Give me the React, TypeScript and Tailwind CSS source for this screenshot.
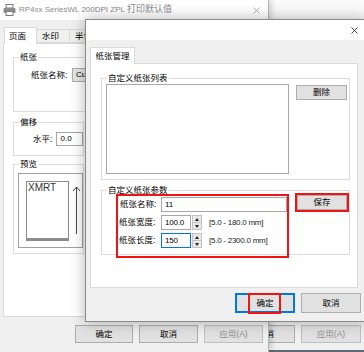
import React from 'react';

const Btn = ({ children, className = '' }: { children: React.ReactNode; className?: string }) => (
  <div className={`flex items-center justify-center bg-[#e1e1e1] border border-[#adadad] text-[8.5px] leading-none ${className}`}>
    {children}
  </div>
);

const Group = ({ title, className = '', children }: { title: string; className?: string; children?: React.ReactNode }) => (
  <fieldset className={`border border-[#dcdcdc] min-w-0 ${className}`}>
    <legend className="ml-[5px] px-[1px] text-[8.5px] leading-[9px]">{title}</legend>
    {children}
  </fieldset>
);

const Cross = ({ color }: { color: string }) => (
  <svg width="7" height="7" viewBox="0 0 7 7">
    <path d="M0.5 0.5L6.5 6.5M6.5 0.5L0.5 6.5" stroke={color} strokeWidth="0.9" />
  </svg>
);

const Spinner = () => (
  <div className="ml-px flex h-[15px] w-[10px] flex-col border border-[#c4c4c4] bg-[#e9e9e9]">
    <div className="flex flex-1 items-center justify-center border-b border-[#c4c4c4]">
      <svg width="4" height="3" viewBox="0 0 4 3"><path d="M2 0L4 3H0Z" fill="#222" /></svg>
    </div>
    <div className="flex flex-1 items-center justify-center">
      <svg width="4" height="3" viewBox="0 0 4 3"><path d="M0 0H4L2 3Z" fill="#222" /></svg>
    </div>
  </div>
);

const ParamRow = ({ label, value, range, focused }: { label: string; value: string; range: string; focused?: boolean }) => (
  <div className="mt-[3px] flex items-center">
    <span className="w-[43px] pl-px text-[8.5px] leading-none">{label}</span>
    <div
      className={`flex h-[15px] w-[30px] items-center bg-white pl-[3px] text-[8px] tracking-[-0.2px] ${
        focused ? 'border border-[#0078d7]' : 'border border-[#a6a6a6]'
      }`}
    >
      {value}
    </div>
    <Spinner />
    <span className="ml-[7px] text-[8px] tracking-[-0.25px] text-[#222]">{range}</span>
  </div>
);

export default function App() {
  return (
    <div className="relative h-[352px] w-[364px] overflow-hidden bg-[#f0f0f0] font-['Liberation_Sans','Noto_Sans_CJK_SC',sans-serif] text-black">
      {/* window behind, to the right */}
      <div className="absolute left-[96px] top-0 flex h-[352px] w-[300px] flex-col bg-[#f0f0f0]">
        <div className="h-[20px] border-b border-[#e2e2e2] bg-[#fafafa]" />
        <div className="flex-1" />
        <div className="flex h-[18px] gap-[6px] pl-[140px]">
          <Btn className="w-[59px]">取消</Btn>
          <Btn className="w-[60px] border-[#bfbfbf] bg-[#cccccc] text-[#8f8f8f]">应用(A)</Btn>
        </div>
        <div className="mt-[7px] h-[2px] bg-[#5e6b75]" />
      </div>

      {/* printing defaults window */}
      <div className="absolute left-0 top-0 flex h-[352px] w-[269px] flex-col border-r border-[#b5b5b5] bg-[#f0f0f0] shadow-[2px_0_6px_rgba(0,0,0,0.18)]">
        <div className="flex h-[20px] items-center bg-white pl-[3px] pr-[8px]">
          <svg width="13" height="12" viewBox="0 0 13 12">
            <rect x="3" y="0.5" width="7" height="3.5" fill="#fff" stroke="#7a7a7a" />
            <rect x="0.5" y="4" width="12" height="5" rx="1" fill="#8c8c8c" />
            <rect x="3" y="7.5" width="7" height="4" fill="#fff" stroke="#7a7a7a" />
          </svg>
          <span className="ml-[3px] whitespace-nowrap text-[8px] text-[#8a8a8a]">
            RP4xx SeriesWL 200DPI ZPL <span className="text-[9px]">打印默认值</span>
          </span>
          <span className="ml-auto">
            <Cross color="#a8a8a8" />
          </span>
        </div>

        <div className="flex h-[23px] items-end pl-[4px] text-[8.5px] leading-none">
          <div className="relative z-10 -mb-px flex h-[17px] w-[33px] items-center border border-b-0 border-[#d9d9d9] bg-white pl-[4px]">页面</div>
          <div className="flex h-[14px] w-[33px] items-center border border-l-0 border-[#d9d9d9] bg-[#f0f0f0] pl-[5px]">水印</div>
          <div className="flex h-[14px] w-[40px] items-center border border-l-0 border-[#d9d9d9] bg-[#f0f0f0] pl-[5px]">半色调</div>
        </div>

        <div className="ml-[3px] h-[274px] w-[264px] border border-[#d9d9d9] bg-white pl-[9px] pt-[9px]">
          <Group title="纸张" className="h-[59px] w-[240px]">
            <div className="mt-[6px] flex items-center">
              <span className="w-[58px] pl-[17px] text-[8.5px] leading-none">纸张名称:</span>
              <div className="flex h-[14px] w-[120px] items-center border border-[#acacac] bg-[#e5e5e5] pl-[3px] text-[8px]">Custom</div>
            </div>
          </Group>
          <Group title="偏移" className="mt-[6px] h-[38px] w-[71px]">
            <div className="mt-[5px] flex items-center">
              <span className="w-[43px] pl-[19px] text-[8.5px] leading-none">水平:</span>
              <div className="flex h-[14px] w-[27px] items-center border border-[#a6a6a6] bg-white pl-[3px] text-[8px]">0.0</div>
            </div>
          </Group>
          <Group title="预览" className="mt-[4px] h-[94px] w-[71px]">
            <div className="ml-[4px] mt-[4px] flex h-[75px] w-[65px] border border-[#a0a0a0] bg-white pl-[7px] pt-[7px]">
              <div className="h-[60px] w-[43px] border border-b-[3px] border-[#8c8c8c] pl-px text-[10px] leading-[11px] text-[#333]">XMRT</div>
              <svg width="9" height="50" viewBox="0 0 9 50" className="ml-[3px] mt-[5px]">
                <path d="M4.5 1V48M1 5L4.5 1L8 5" stroke="#333" strokeWidth="0.9" fill="none" />
              </svg>
            </div>
          </Group>
        </div>

        <div className="mt-[8px] flex h-[18px] gap-[6px] pl-[75px]">
          <Btn className="w-[58px]">确定</Btn>
          <Btn className="w-[59px]">取消</Btn>
          <Btn className="w-[59px] border-[#bfbfbf] bg-[#cccccc] text-[#8f8f8f]">应用(A)</Btn>
        </div>
      </div>

      {/* paper management dialog */}
      <div className="absolute left-[85px] top-[19px] flex h-[303px] w-[281px] flex-col border border-[#8a8a8a] bg-[#f0f0f0] shadow-[0_0_14px_rgba(0,0,0,0.3)]">
        <div className="flex h-[20px] items-center justify-end bg-white pr-[7px]">
          <Cross color="#333" />
        </div>

        <div className="mt-[7px] flex pl-[4px]">
          <div className="relative z-10 -mb-px flex h-[17px] w-[45px] items-center justify-center border border-b-0 border-[#d9d9d9] bg-white text-[8.5px] leading-none">
            纸张管理
          </div>
        </div>

        <div className="ml-[4px] h-[225px] w-[268px] border border-[#d9d9d9] bg-white pl-[10px] pt-[10px]">
          <Group title="自定义纸张列表" className="h-[106px] w-[249px]">
            <div className="flex items-start pl-[4px] pt-px">
              <div className="h-[90px] w-[183px] border border-[#a9a9a9] bg-white" />
              <Btn className="ml-[7px] mt-px h-[15px] w-[51px]">删除</Btn>
            </div>
          </Group>

          <Group title="自定义纸张参数" className="mt-[6px] h-[69px] w-[249px]">
            <div className="-mt-px flex items-start pl-[14px]">
              <div className="h-[64px] w-[173px] border-2 border-[#f21414]">
                <div className="mt-px flex items-center">
                  <span className="w-[43px] pl-[2px] text-[8.5px] leading-none">纸张名称:</span>
                  <div className="flex h-[15px] w-[126px] items-center border border-[#a6a6a6] bg-white pl-[3px] text-[8px]">11</div>
                </div>
                <ParamRow label="纸张宽度:" value="100.0" range="[5.0 - 180.0 mm]" />
                <ParamRow label="纸张长度:" value="150" range="[5.0 - 2300.0 mm]" focused />
              </div>
              <div className="-mt-px ml-[6px] border-2 border-[#f21414]">
                <Btn className="h-[15px] w-[50px]">保存</Btn>
              </div>
            </div>
          </Group>
        </div>

        <div className="mt-[5px] flex justify-end gap-[6px] pr-[4px]">
          <div className="relative flex h-[20px] w-[60px] items-center justify-center border-2 border-[#0078d7] bg-[#e1e1e1] text-[8.5px] leading-none">
            确定
            <div className="absolute left-[11px] top-[-2px] h-[21px] w-[33px] border-2 border-[#f21414]" />
          </div>
          <Btn className="h-[20px] w-[60px]">取消</Btn>
        </div>
      </div>
    </div>
  );
}
